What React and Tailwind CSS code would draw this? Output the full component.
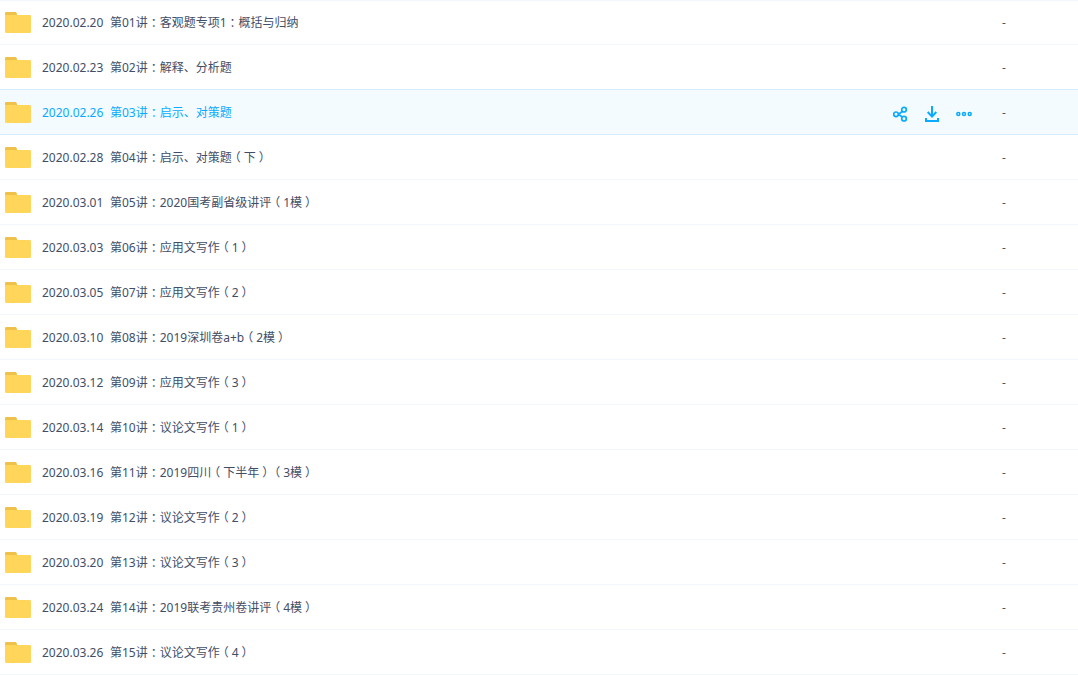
import React from "react";

const files = [
  ["2020.02.20", "第01讲：客观题专项1：概括与归纳"],
  ["2020.02.23", "第02讲：解释、分析题"],
  ["2020.02.26", "第03讲：启示、对策题"],
  ["2020.02.28", "第04讲：启示、对策题（下）"],
  ["2020.03.01", "第05讲：2020国考副省级讲评（1模）"],
  ["2020.03.03", "第06讲：应用文写作（1）"],
  ["2020.03.05", "第07讲：应用文写作（2）"],
  ["2020.03.10", "第08讲：2019深圳卷a+b（2模）"],
  ["2020.03.12", "第09讲：应用文写作（3）"],
  ["2020.03.14", "第10讲：议论文写作（1）"],
  ["2020.03.16", "第11讲：2019四川（下半年）（3模）"],
  ["2020.03.19", "第12讲：议论文写作（2）"],
  ["2020.03.20", "第13讲：议论文写作（3）"],
  ["2020.03.24", "第14讲：2019联考贵州卷讲评（4模）"],
  ["2020.03.26", "第15讲：议论文写作（4）"],
];

const activeDate = "2020.02.26";

function FolderIcon() {
  return (
    <svg width="26" height="21" viewBox="0 0 26 21" className="shrink-0" aria-hidden="true">
      <path d="M0 6V1.2Q0 0 1.2 0H10.3Q11.3 0 11.6 1L12.5 3.5V6Z" fill="#efc14a" />
      <path d="M0 3H24.8Q26 3 26 4.2V19.5Q26 21 24.5 21H1.5Q0 21 0 19.5Z" fill="#ffd65a" />
    </svg>
  );
}

function ShareIcon() {
  return (
    <svg width="16" height="16" viewBox="0 0 16 16" fill="none" stroke="currentColor" strokeWidth="1.7" aria-hidden="true">
      <circle cx="4" cy="8.3" r="2.3" />
      <circle cx="12" cy="3.7" r="2.3" />
      <circle cx="12" cy="12.7" r="2.3" />
      <path d="M6.2 8Q8.6 7.3 10.1 5.4M6.2 8.6Q8.6 9.2 10.1 11.1" />
    </svg>
  );
}

function DownloadIcon() {
  return (
    <svg width="16" height="16" viewBox="0 0 16 16" fill="none" stroke="currentColor" strokeWidth="2" aria-hidden="true">
      <path d="M8 0V11M3.7 6L8 10.6L12.3 6" />
      <path d="M2 12V15H14V12" />
    </svg>
  );
}

function MoreIcon() {
  return (
    <svg width="16" height="16" viewBox="0 0 16 16" fill="none" stroke="currentColor" strokeWidth="1.5" aria-hidden="true">
      <circle cx="2.3" cy="8" r="1.5" />
      <circle cx="8" cy="8" r="1.5" />
      <circle cx="13.7" cy="8" r="1.5" />
    </svg>
  );
}

// Colons and brackets sit in the middle of a full-width cell.
function Title({ text }) {
  return (
    <span>
      {text.split(/([：（）])/).map((part, i) =>
        i % 2 === 1 ? (
          <span key={i} className="inline-block w-3 text-center [font-feature-settings:'halt']">
            {part}
          </span>
        ) : (
          part
        )
      )}
    </span>
  );
}

function FileRow({ date, title, active, beforeActive }) {
  const cell =
    active || beforeActive
      ? "border-b border-[#d9eafb] p-0"
      : "border-b border-[#f2f6fd] p-0";
  return (
    <tr className={active ? "h-[45px] bg-[#f4fbff]" : "h-[45px]"}>
      <td className={cell}>
        <a
          href="#"
          className={
            active
              ? "flex h-11 items-center pt-px pl-[5px] text-[#09aaff]"
              : "flex h-11 items-center pt-px pl-[5px] text-[#424e67]"
          }
        >
          <FolderIcon />
          <span className="ml-[11px] w-[68px]">{date}</span>
          <Title text={title} />
        </a>
      </td>
      <td className={cell}>
        {active && (
          <div className="flex gap-4 pt-1 text-[#09aaff]">
            <button type="button" aria-label="分享"><ShareIcon /></button>
            <button type="button" aria-label="下载"><DownloadIcon /></button>
            <button type="button" aria-label="更多"><MoreIcon /></button>
          </div>
        )}
      </td>
      <td className={cell + " text-[#555555]"}>
        <div className="pt-0.5">-</div>
      </td>
    </tr>
  );
}

export default function App() {
  return (
    <main className="bg-white font-['Noto_Sans','Noto_Sans_CJK_SC',sans-serif] text-xs shadow-[inset_0_1px_0_#f2f6fd]">
      <table className="w-full table-fixed border-separate border-spacing-0">
        <colgroup>
          <col />
          <col className="w-[110px]" />
          <col className="w-[76px]" />
        </colgroup>
        <tbody>
          {files.map(([date, title], i) => (
            <FileRow
              key={date}
              date={date}
              title={title}
              active={date === activeDate}
              beforeActive={i + 1 < files.length && files[i + 1][0] === activeDate}
            />
          ))}
        </tbody>
      </table>
    </main>
  );
}
